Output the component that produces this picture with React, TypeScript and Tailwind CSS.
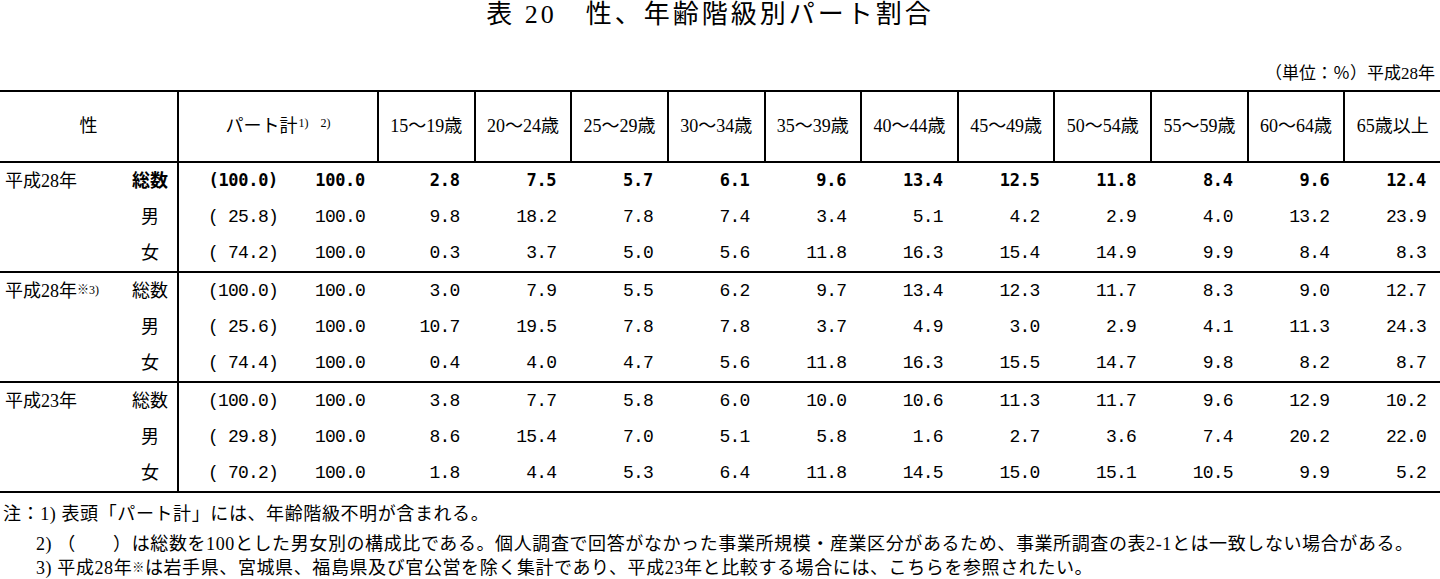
import React from 'react';

const ages = ['15～19歳', '20～24歳', '25～29歳', '30～34歳', '35～39歳', '40～44歳', '45～49歳', '50～54歳', '55～59歳', '60～64歳', '65歳以上'];

type Row = { sub: string; share: string; total: string; vals: string[] };
type Group = { label: React.ReactNode; bold?: boolean; rows: Row[] };

const groups: Group[] = [
  {
    label: '平成28年',
    bold: true,
    rows: [
      { sub: '総数', share: '(100.0)', total: '100.0', vals: ['2.8', '7.5', '5.7', '6.1', '9.6', '13.4', '12.5', '11.8', '8.4', '9.6', '12.4'] },
      { sub: '男', share: '( 25.8)', total: '100.0', vals: ['9.8', '18.2', '7.8', '7.4', '3.4', '5.1', '4.2', '2.9', '4.0', '13.2', '23.9'] },
      { sub: '女', share: '( 74.2)', total: '100.0', vals: ['0.3', '3.7', '5.0', '5.6', '11.8', '16.3', '15.4', '14.9', '9.9', '8.4', '8.3'] },
    ],
  },
  {
    label: (
      <>
        平成28年<sup className="text-[12px] relative -top-[3px]">※3)</sup>
      </>
    ),
    rows: [
      { sub: '総数', share: '(100.0)', total: '100.0', vals: ['3.0', '7.9', '5.5', '6.2', '9.7', '13.4', '12.3', '11.7', '8.3', '9.0', '12.7'] },
      { sub: '男', share: '( 25.6)', total: '100.0', vals: ['10.7', '19.5', '7.8', '7.8', '3.7', '4.9', '3.0', '2.9', '4.1', '11.3', '24.3'] },
      { sub: '女', share: '( 74.4)', total: '100.0', vals: ['0.4', '4.0', '4.7', '5.6', '11.8', '16.3', '15.5', '14.7', '9.8', '8.2', '8.7'] },
    ],
  },
  {
    label: '平成23年',
    rows: [
      { sub: '総数', share: '(100.0)', total: '100.0', vals: ['3.8', '7.7', '5.8', '6.0', '10.0', '10.6', '11.3', '11.7', '9.6', '12.9', '10.2'] },
      { sub: '男', share: '( 29.8)', total: '100.0', vals: ['8.6', '15.4', '7.0', '5.1', '5.8', '1.6', '2.7', '3.6', '7.4', '20.2', '22.0'] },
      { sub: '女', share: '( 70.2)', total: '100.0', vals: ['1.8', '4.4', '5.3', '6.4', '11.8', '14.5', '15.0', '15.1', '10.5', '9.9', '5.2'] },
    ],
  },
];

const grid = 'grid grid-cols-[177px_200px_repeat(11,1fr)]';
const mincho = "font-['Liberation_Serif','Noto_Sans_CJK_JP',serif]";

export default function App() {
  return (
    <div className={`w-[1440px] h-[579px] bg-white text-black overflow-hidden ${mincho}`}>
      {/* タイトル */}
      <div className="h-[30px] flex items-center justify-center text-[26px] tracking-[3px] leading-none pr-[20px]">
        表 20　性、年齢階級別パート割合
      </div>
      <div className="h-[60px] flex items-end justify-end pr-[5px] pb-[8px] text-[17px] leading-none">
        （単位：％）平成28年
      </div>

      {/* 表 */}
      <div className="border-t-2 border-b-2 border-black">
        <div className={`${grid} h-[71px] border-b-2 border-black text-[18px]`}>
          <div className="flex items-center justify-center">性</div>
          <div className="flex items-center justify-center border-l-2 border-black">
            パート計<sup className="text-[12px] relative -top-[4px] ml-[1px]">1)　2)</sup>
          </div>
          {ages.map((a) => (
            <div key={a} className="flex items-center justify-center border-l-2 border-black whitespace-nowrap">
              {a}
            </div>
          ))}
        </div>

        {groups.map((g, gi) => (
          <div key={gi} className={gi < groups.length - 1 ? 'border-b-2 border-black' : ''}>
            {g.rows.map((r, ri) => {
              const bold = g.bold && ri === 0;
              const num = bold
                ? "font-['DejaVu_Sans_Mono',monospace] font-bold text-[17px] tracking-[-0.3px]"
                : "font-['Liberation_Mono',monospace] text-[18px] tracking-[-0.8px]";
              return (
                <div key={ri} className={`${grid} h-9 items-center`}>
                  <div className="flex items-center justify-between pl-[5px] pr-[7px] text-[18px]">
                    <span>{ri === 0 ? g.label : ''}</span>
                    <span className={`w-10 text-center ${bold ? 'font-bold' : ''}`}>{r.sub}</span>
                  </div>
                  <div className={`h-full flex items-center border-l-2 border-black whitespace-pre ${num}`}>
                    <span className="w-[99px] text-right">{r.share}</span>
                    <span className="w-[87px] text-right">{r.total}</span>
                  </div>
                  {r.vals.map((v, vi) => (
                    <div key={vi} className={`text-right pr-[14px] ${num}`}>
                      {v}
                    </div>
                  ))}
                </div>
              );
            })}
          </div>
        ))}
      </div>

      {/* 注 */}
      <div className="pt-[7px] pl-[3px] text-[18px] leading-[29.5px] tracking-[0.6px] whitespace-nowrap">
        <div>注：1) 表頭「パート計」には、年齢階級不明が含まれる。</div>
        <div className="pl-[33px]">
          2) （　　）は総数を100とした男女別の構成比である。個人調査で回答がなかった事業所規模・産業区分があるため、事業所調査の表2-1とは一致しない場合がある。
        </div>
        <div className="pl-[33px] leading-[18px]">
          3) 平成28年<sup className="text-[12px] relative -top-[2px]">※</sup>は岩手県、宮城県、福島県及び官公営を除く集計であり、平成23年と比較する場合には、こちらを参照されたい。
        </div>
      </div>
    </div>
  );
}
